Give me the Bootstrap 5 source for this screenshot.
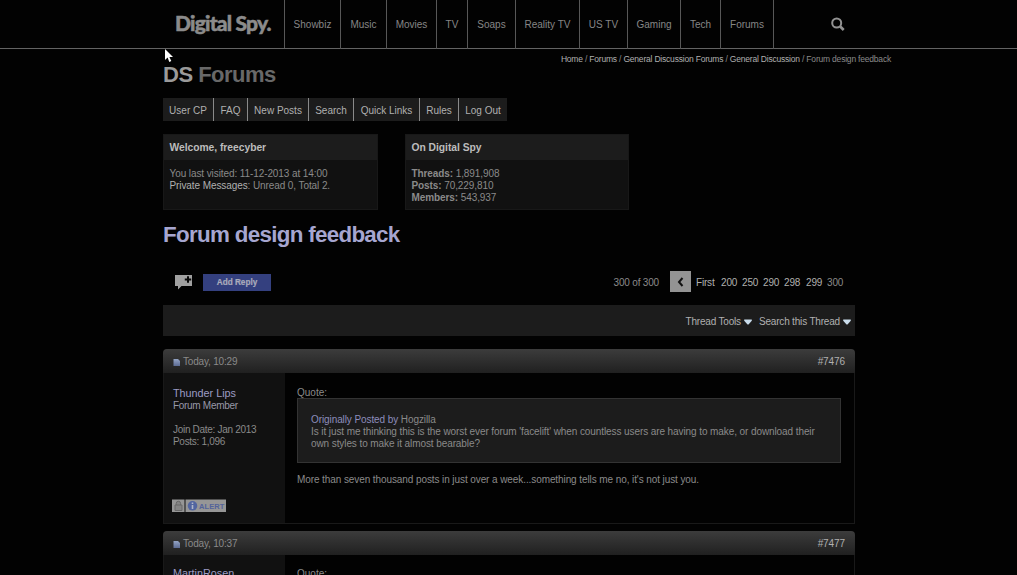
<!DOCTYPE html>
<html lang="en">
<head>
<meta charset="utf-8">
<title>Forum design feedback - Digital Spy Forums</title>
<link href="https://cdn.jsdelivr.net/npm/bootstrap@5.3.0/dist/css/bootstrap.min.css" rel="stylesheet">
<style>
body{background:#020202;color:#8a8a8a;font:10px/12px "Liberation Sans",Arial,sans-serif;height:575px;overflow:hidden}
a,a:hover{color:#b0b0b0;text-decoration:none}
svg{display:block;flex:none}
.topbar{height:49px;border-bottom:1px solid #636363;padding-left:163px}
.brand-name,.brand-name:hover{width:121px;padding:9px 0 0 12px;font:900 21px/28px Lato,sans-serif;letter-spacing:-.8px;color:#8b8b8b;white-space:nowrap;-webkit-text-stroke:.5px #8b8b8b}
.sections{display:grid;grid-template-columns:56px 46px 50px 31px 48px 64px 48px 53px 40px 53px;height:48px;border-left:1px solid #575757}
.sections a{border-right:1px solid #575757;color:#868686;text-align:center;line-height:49px;white-space:nowrap}
.glass{margin:16px 0 0 55px}
.page{width:692px;margin-left:163px}
.crumbs{font-size:8.5px;letter-spacing:-.2px;line-height:12px;height:14px;width:728px;padding-top:4px;white-space:nowrap}
.site-title{font-size:22px;line-height:24px;font-weight:bold;letter-spacing:-.5px;color:#686868;margin:0;height:35px}
.site-title b{color:#9a9a9a}
.tabs{height:23px;display:grid;grid-template:23px/51px 34px 61px 45px 66px 39px 48px;width:344px}
.tabs a{background:#1c1c1c;border-right:1px solid #8a8a8a;line-height:25px;text-align:center;white-space:nowrap;overflow:hidden}
.tabs a:last-child{border:0}
.panels{margin-top:13px;gap:27px}
.panel{height:76px;width:224px;background:#111;border:1px solid #181818}
.panel.welcome{width:215px}
.panel h2{font-size:10.3px;line-height:25px;height:25px;background:#1c1c1c;color:#bcbcbc;font-weight:bold;letter-spacing:-.03px;margin:0;padding-left:5.5px}
.panel div{padding:8px 5.5px 0;white-space:nowrap}
.thread-title{font-size:22.4px;line-height:26px;font-weight:bold;letter-spacing:-.7px;color:#a6a6d0;margin:12px 0 0;height:48px}
.actions{height:23px}
.reply,.reply:hover{width:68px;height:17px;margin:2px 0 0 10px;background:#34407f;color:#a9abbb;font:bold 8.2px/17px "Liberation Sans",sans-serif;text-align:center;-webkit-text-stroke:.2px #a9abbb}
.prev{width:21px;height:21px;background:#939393;margin:0 5px 0 11px}
.pages{display:grid;grid-template-columns:25px 21px 21px 21px 22px 21px 28px;white-space:nowrap;padding-top:2px}
.toolbar{height:31px;margin-top:12px;background:#1c1c1c;padding:2px 4px 0 0}
.post-head{height:24px;background:linear-gradient(#3c3c3c,#202020);border-radius:4px 4px 0 0;padding:2px 10px 0;margin-top:13px}
.post-head.next-post{margin-top:7px}
.post-body{border:1px solid #191919;border-top:0;height:151px}
.post-body.last-post{height:20px;border-bottom:0;overflow:hidden}
.author{width:121px;background:#111;padding:13px 9px 0;letter-spacing:-.3px;white-space:nowrap}
.author .user-link{font-size:10.8px;line-height:14px;letter-spacing:0;color:#9c9cc4;display:block}
.last-post .author .user-link{line-height:13px;margin-top:-1px}
.message{padding:14px 0 0 12px;white-space:nowrap}
.last-post .message{padding-top:13px}
.quote{border:1px solid #333;background:#1c1c1c;height:65px;width:544px;padding:15px 13px 0;margin:-1px 0 11px}
.snug{letter-spacing:-.09px}
.tight{letter-spacing:-.18px}
.ink{color:#9898a8}
.lilac{color:#8d8dbd}
.badges{margin:51px 0 0 -1px}
.pointer{position:absolute;left:164px;top:49px}
</style>
</head>
<body>
<svg width="0" height="0" class="position-absolute"><defs>
<linearGradient id="pg" x2="0" y2="1"><stop stop-color="#93a3c4"/><stop offset="1" stop-color="#5c6b93"/></linearGradient>
<symbol id="sheet" viewBox="0 0 7 7"><path d="M.5 0h4.500l2 2V7H.5z" fill="url(#pg)"/></symbol>
<symbol id="arrow" viewBox="0 0 8 6"><path d="M.2.5h7.600v1.200L4.500 5.500h-1L.2 1.700z" fill="#c9dbea"/></symbol>
</defs></svg>
<header class="topbar d-flex">
<a class="brand-name" href="#">Digital Spy.</a>
<nav class="sections"><a href="#">Showbiz</a><a href="#">Music</a><a href="#">Movies</a><a href="#">TV</a><a href="#">Soaps</a><a href="#">Reality TV</a><a href="#">US TV</a><a href="#">Gaming</a><a href="#">Tech</a><a href="#">Forums</a></nav>
<svg class="glass" width="18" height="16" viewBox="0 0 18 16"><g fill="none" stroke="#929292" stroke-width="2"><circle cx="7.700" cy="7" r="4.500"/><path d="M11 10.300l3.700 3.700" stroke-width="2.700"/></g></svg>
</header>
<main class="page">
<div class="crumbs text-end"><a href="#">Home</a> / <a href="#">Forums</a> / <a href="#">General Discussion Forums</a> / <a href="#">General Discussion</a> / Forum design feedback</div>
<h1 class="site-title"><b>DS</b> Forums</h1>
<nav class="tabs"><a href="#">User CP</a><a href="#">FAQ</a><a href="#">New Posts</a><a href="#">Search</a><a href="#">Quick Links</a><a href="#">Rules</a><a href="#">Log Out</a></nav>
<section class="panels d-flex">
<div class="panel welcome"><h2>Welcome, freecyber</h2><div class="snug">You last visited: 11-12-2013 at 14:00<br><a href="#">Private Messages</a>: Unread 0, Total 2.</div></div>
<div class="panel"><h2>On Digital Spy</h2><div class="snug"><b>Threads:</b> 1,891,908<br><b>Posts:</b> 70,229,810<br><b>Members:</b> 543,937</div></div>
</section>
<h2 class="thread-title">Forum design feedback</h2>
<div class="actions d-flex align-items-center">
<svg style="margin-left:12px" width="18" height="16" viewBox="0 0 18 16"><path d="M0 1h17v11H6.500L3 15.500V12H0z" fill="#a0a0a0"/><path d="M13 2.300v6.400M9.800 5.500h6.400" stroke="#080808" stroke-width="2"/></svg>
<a class="reply" href="#">Add Reply</a>
<span class="ms-auto tight" style="padding-top:2px">300 of 300</span>
<a class="prev d-flex align-items-center justify-content-center" href="#"><svg width="7" height="10" viewBox="0 0 7 10"><path d="M5.500 1L2 5l3.500 4" fill="none" stroke="#111" stroke-width="2"/></svg></a>
<div class="pages tight"><a href="#">First</a><a href="#">200</a><a href="#">250</a><a href="#">290</a><a href="#">298</a><a href="#">299</a><span>300</span></div>
</div>
<div class="toolbar d-flex align-items-center justify-content-end"><a class="tight" href="#">Thread Tools</a><svg style="margin-left:3px" width="8" height="6"><use href="#arrow"/></svg><a class="tight" style="margin-left:7px" href="#">Search this Thread</a><svg style="margin-left:3px" width="8" height="6"><use href="#arrow"/></svg></div>
<div class="post-head d-flex align-items-center justify-content-between"><span class="d-flex align-items-center tight"><svg style="margin:0 3px 0 0" width="7" height="7"><use href="#sheet"/></svg>Today, 10:29</span><a class="snug" href="#">#7476</a></div>
<article class="post-body d-flex">
<aside class="author"><a class="user-link" href="#">Thunder Lips</a><span class="ink">Forum Member</span><br><br>Join Date: Jan 2013<br>Posts: 1,096
<svg class="badges" width="54" height="14" viewBox="0 0 54 14"><path d="M0 .5h12.500v12.500H0zM13.500.5H54v12.500H13.500z" fill="#969696"/><path d="M4.200 6V4.500a2.200 2.200 0 014.400 0V6M3 6h7v5.500H3z" fill="#858585" stroke="#686868"/><circle cx="20.500" cy="6.800" r="4.800" fill="#5265a0"/><path d="M20.500 3.500v1.500M20.500 6v4" stroke="#b0b6c8" stroke-width="1.600"/><text x="27" y="9.700" font-family="Liberation Sans" font-size="7.500" font-weight="bold" fill="#53639a" textLength="25">ALERT</text></svg></aside>
<div class="message"><span>Quote:</span><div class="quote snug"><span class="lilac">Originally Posted by</span> Hogzilla<br>Is it just me thinking this is the worst ever forum 'facelift' when countless users are having to make, or download their<br>own styles to make it almost bearable?</div><span class="snug">More than seven thousand posts in just over a week...something tells me no, it's not just you.</span></div>
</article>
<div class="post-head next-post d-flex align-items-center justify-content-between"><span class="d-flex align-items-center tight"><svg style="margin:0 3px 0 0" width="7" height="7"><use href="#sheet"/></svg>Today, 10:37</span><a class="snug" href="#">#7477</a></div>
<article class="post-body last-post d-flex"><aside class="author"><a class="user-link" href="#">MartinRosen</a></aside><div class="message">Quote:</div></article>
</main>
<div class="pointer"><svg width="10" height="14" viewBox="0 0 10 14"><path d="M1 0v11l2.600-2.400L5.300 13l2-1-1.900-4H9z" fill="#fff"/></svg></div>
</body>
</html>
